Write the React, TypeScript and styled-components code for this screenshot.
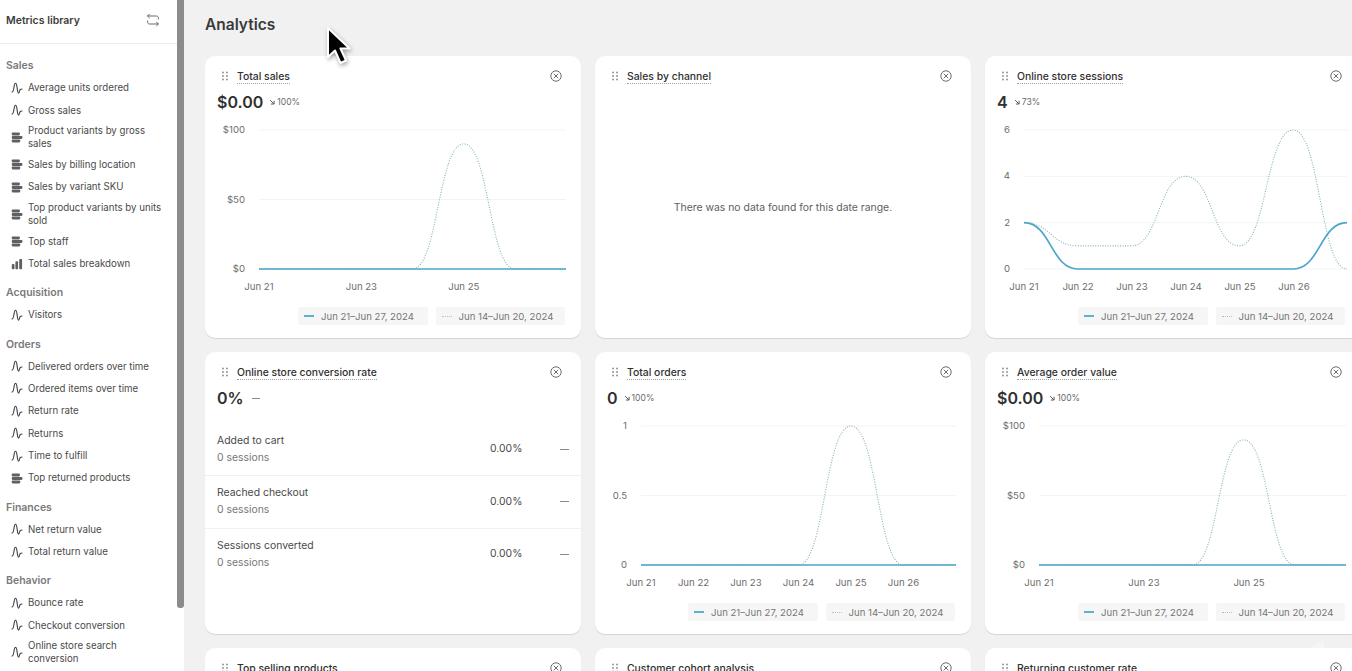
import * as React from 'react';
import styled, { createGlobalStyle } from 'styled-components';

const GlobalStyle = createGlobalStyle`
  html, body {
    margin: 0;
    padding: 0;
    height: 100%;
    overflow: hidden;
    background: #f1f1f1;
    font-family: Inter, "Liberation Sans", sans-serif;
    color: #303030;
  }
`;

const Page = styled.div`
  display: flex;
  width: 1352px;
  height: 671px;
  overflow: hidden;
  position: relative;
`;

const Sidebar = styled.aside`
  width: 177px;
  flex: none;
  background: #fff;
  overflow: hidden;
`;

const ScrollTrack = styled.div`
  width: 7px;
  flex: none;
  background: #fff;
`;

const ScrollThumb = styled.div`
  height: 608px;
  background: #8b8b8b;
  border-radius: 0 0 3px 3px;
`;

const SidebarHeader = styled.div`
  height: 44px;
  box-sizing: border-box;
  padding: 0 17px 3px 6px;
  display: flex;
  align-items: center;
  justify-content: space-between;
  border-bottom: 1px solid #ececec;
  font-size: 10.5px;
  font-weight: 600;
  color: #3d3d3d;
`;

const SidebarBody = styled.div`
  padding-top: 11px;
`;

const Section = styled.section`
  margin-bottom: 7.3px;
`;

const SectionTitle = styled.div`
  height: 21.5px;
  padding-left: 6px;
  display: flex;
  align-items: center;
  font-size: 10.5px;
  font-weight: 600;
  color: #7a7a7a;
`;

const Item = styled.div`
  display: flex;
  align-items: center;
  gap: 5px;
  min-height: 22.4px;
  box-sizing: border-box;
  padding: 3px 12px 3px 11px;
  font-size: 9.7px;
  line-height: 13px;
  color: #4a4a4a;
`;

const ItemIcon = styled.svg`
  width: 12px;
  height: 12px;
  flex: none;
  color: #454545;
`;

const Main = styled.main`
  flex: 1;
  min-width: 0;
  padding: 0 0 0 21px;
`;

const PageTitle = styled.h1`
  margin: 0;
  height: 56px;
  box-sizing: border-box;
  padding-bottom: 7px;
  display: flex;
  align-items: center;
  font-size: 15.5px;
  font-weight: 600;
  color: #3a3a3a;
`;

const CardGrid = styled.div`
  display: grid;
  grid-template-columns: repeat(3, 376px);
  grid-auto-rows: 282px;
  gap: 14px;
`;

const Card = styled.article`
  box-sizing: border-box;
  background: #fff;
  border-radius: 10px;
  box-shadow: 0 1px 1px rgba(0, 0, 0, 0.12);
  padding: 13px 16px 0 12px;
  position: relative;
  display: flex;
  flex-direction: column;
`;

const CardHead = styled.div`
  display: flex;
  align-items: center;
  height: 14px;
`;

const Grip = styled.svg`
  width: 8px;
  height: 10px;
  margin-right: 8px;
  margin-left: 4px;
  flex: none;
  color: #8a8a8a;
`;

const CardTitle = styled.span`
  margin-top: 2px;
  font-size: 10.4px;
  font-weight: 500;
  color: #303030;
  border-bottom: 1px dotted #a0a0a0;
  line-height: 12px;
`;

const CloseIcon = styled.svg`
  width: 12px;
  height: 12px;
  margin-left: auto;
  margin-right: 3px;
  color: #5c5c5c;
`;

const Metric = styled.div`
  display: flex;
  align-items: center;
  height: 18px;
  margin-top: 10px;
  gap: 6px;
`;

const MetricValue = styled.span`
  font-size: 16px;
  font-weight: 600;
  color: #303030;
`;

const MetricDelta = styled.span`
  display: flex;
  align-items: center;
  gap: 2px;
  font-size: 8.6px;
  color: #6b6b6b;
`;

const ArrowIcon = styled.svg`
  width: 6px;
  height: 6px;
  color: #555;
`;

const FlatDash = styled.span`
  width: 8px;
  height: 1px;
  margin-left: 2px;
  background: #8a8a8a;
`;

const ChartSvg = styled.svg`
  display: block;
  position: relative;
  margin-left: -12px;
  width: 376px;
  height: 176px;
  margin-top: 9px;
  overflow: visible;
`;

const ChartLabel = styled.text`
  font-family: Inter, "Liberation Sans", sans-serif;
  font-size: 9.6px;
  fill: #6d6d6d;
`;

const Legend = styled.div`
  display: flex;
  justify-content: flex-end;
  gap: 8px;
  height: 18px;
  margin-top: 11px;
`;

const LegendItem = styled.div`
  width: 129.5px;
  box-sizing: border-box;
  padding-left: 6px;
  background: #f6f6f6;
  border-radius: 2px;
  display: flex;
  align-items: center;
  gap: 7px;
  font-size: 9.6px;
  color: #777;
  white-space: nowrap;
`;

const LegendSwatch = styled.span<{ $dotted?: boolean }>`
  width: 10px;
  height: 0;
  border-top: ${(p) => (p.$dotted ? '1px dotted #b5c4c4' : '2px solid #5eb0cf')};
`;

const EmptyNote = styled.div`
  flex: 1;
  display: flex;
  align-items: center;
  justify-content: center;
  padding: 0 0 6px 4px;
  font-size: 10.4px;
  color: #5e5e5e;
`;

const FunnelList = styled.div`
  margin: 17px -16px 0 -12px;
`;

const FunnelRow = styled.div`
  display: flex;
  align-items: center;
  height: 52.3px;
  box-sizing: border-box;
  padding: 0 12px 0 12px;
  border-bottom: 1px solid #f1f1f1;
  font-size: 10.4px;
  line-height: 16.5px;

  &:last-child {
    border-bottom: 0;
  }
`;

const FunnelName = styled.div`
  flex: 1;
  color: #4a4a4a;
`;

const FunnelSub = styled.div`
  color: #777;
`;

const FunnelValue = styled.div`
  width: 33px;
  color: #4a4a4a;
`;

const FunnelDash = styled.span`
  width: 9px;
  height: 1px;
  margin-left: 37px;
  background: #8a8a8a;
`;

const Cursor = styled.svg`
  position: absolute;
  left: 322px;
  top: 24px;
  width: 32px;
  height: 44px;
  filter: drop-shadow(1px 2px 2px rgba(0, 0, 0, 0.35));
`;

const Watermark = styled.svg`
  position: absolute;
  left: 1300px;
  top: 636px;
  width: 30px;
  height: 35px;
  opacity: 0.55;
`;

type IconKind = 'line' | 'stack' | 'bars';

const LineGlyph = () => (
  <path d="M1 10C2 10 2.6 8 3 5 3.4 2.5 3.8 1.2 4.6 1.2 5.6 1.2 5.8 3.5 6.2 6.5 6.5 9 6.8 11.2 7.6 11.2 8.2 11.2 8.4 8.6 9 7.8 9.4 7.3 10.2 7 11 7" fill="none" stroke="currentColor" strokeWidth="1.15" strokeLinecap="round" />
);

const StackGlyph = () => (
  <g fill="currentColor" opacity="0.85">
    <rect x="0.8" y="1.4" width="8" height="3" rx="0.8" />
    <rect x="0.8" y="4.9" width="10.6" height="3" rx="0.8" />
    <rect x="0.8" y="8.4" width="8.4" height="3" rx="0.8" />
  </g>
);

const BarsGlyph = () => (
  <g fill="currentColor" opacity="0.85">
    <rect x="0.8" y="6" width="2.7" height="5.2" rx="0.9" />
    <rect x="4.4" y="3.2" width="2.7" height="8" rx="0.9" />
    <rect x="8.2" y="1" width="2.9" height="10.2" rx="0.9" />
  </g>
);

const MetricIcon = ({ kind }: { kind: IconKind }) => (
  <ItemIcon viewBox="0 0 12 12">
    {kind === 'line' && <LineGlyph />}
    {kind === 'stack' && <StackGlyph />}
    {kind === 'bars' && <BarsGlyph />}
  </ItemIcon>
);

const library: { title: string; items: [string, IconKind][] }[] = [
  {
    title: 'Sales',
    items: [
      ['Average units ordered', 'line'],
      ['Gross sales', 'line'],
      ['Product variants by gross sales', 'stack'],
      ['Sales by billing location', 'stack'],
      ['Sales by variant SKU', 'stack'],
      ['Top product variants by units sold', 'stack'],
      ['Top staff', 'stack'],
      ['Total sales breakdown', 'bars'],
    ],
  },
  { title: 'Acquisition', items: [['Visitors', 'line']] },
  {
    title: 'Orders',
    items: [
      ['Delivered orders over time', 'line'],
      ['Ordered items over time', 'line'],
      ['Return rate', 'line'],
      ['Returns', 'line'],
      ['Time to fulfill', 'line'],
      ['Top returned products', 'stack'],
    ],
  },
  {
    title: 'Finances',
    items: [
      ['Net return value', 'line'],
      ['Total return value', 'line'],
    ],
  },
  {
    title: 'Behavior',
    items: [
      ['Bounce rate', 'line'],
      ['Checkout conversion', 'line'],
      ['Online store search conversion', 'line'],
    ],
  },
];

const smooth = (pts: [number, number][]) =>
  pts
    .map(([x, y], i) => {
      if (i === 0) return `M${x} ${y}`;
      const [px, py] = pts[i - 1];
      const mid = (x - px) * 0.5;
      return `C${px + mid} ${py} ${x - mid} ${y} ${x} ${y}`;
    })
    .join(' ');

interface ChartProps {
  left: number;
  right: number;
  yLabels: string[];
  xLabels: string[];
  xStep: number;
  current: number[];
  previous: number[];
  max: number;
  top?: number;
  height?: number;
}

const Chart = ({ left, right, yLabels, xLabels, xStep, current, previous, max, top = 10, height = 139 }: ChartProps) => {
  const bottom = top + height;
  const step = (right - left) / (current.length - 1);
  const toPts = (vals: number[]) => vals.map((v, i): [number, number] => [left + i * step, bottom - (v / max) * height]);
  return (
    <ChartSvg viewBox="0 0 376 176">
      {yLabels.map((l, i) => {
        const y = top + (height * i) / (yLabels.length - 1);
        return (
          <g key={l}>
            <line x1={left} x2={right} y1={y} y2={y} stroke="#f3f3f3" strokeWidth="1" />
            <ChartLabel x={left - 14} y={y + 3} textAnchor="end">{l}</ChartLabel>
          </g>
        );
      })}
      {xLabels.map((l, i) => (
        <ChartLabel key={l} x={left + i * xStep} y={bottom + 21} textAnchor="middle">{l}</ChartLabel>
      ))}
      <path d={smooth(toPts(previous))} fill="none" stroke="#84b3b3" strokeWidth="1.1" strokeDasharray="1 1.5" />
      <path d={smooth(toPts(current))} fill="none" stroke="#4ba6c8" strokeWidth="1.7" />
    </ChartSvg>
  );
};

const CardHeader = ({ title }: { title: string }) => (
  <CardHead>
    <Grip viewBox="0 0 8 10">
      <g fill="currentColor">
        <circle cx="2" cy="1.5" r="0.9" />
        <circle cx="6" cy="1.5" r="0.9" />
        <circle cx="2" cy="5" r="0.9" />
        <circle cx="6" cy="5" r="0.9" />
        <circle cx="2" cy="8.5" r="0.9" />
        <circle cx="6" cy="8.5" r="0.9" />
      </g>
    </Grip>
    <CardTitle>{title}</CardTitle>
    <CloseIcon viewBox="0 0 12 12">
      <circle cx="6" cy="6" r="5.2" fill="none" stroke="currentColor" strokeWidth="0.9" />
      <path d="M4 4l4 4M8 4l-4 4" fill="none" stroke="currentColor" strokeWidth="0.9" strokeLinecap="round" />
    </CloseIcon>
  </CardHead>
);

const Delta = ({ value }: { value: string }) => (
  <MetricDelta>
    <ArrowIcon viewBox="0 0 8 8">
      <path d="M1.5 1.5l5 5M6.8 2.4v4.3H2.5" fill="none" stroke="currentColor" strokeWidth="1.3" />
    </ArrowIcon>
    {value}
  </MetricDelta>
);

const LegendRow = () => (
  <Legend>
    <LegendItem>
      <LegendSwatch />
      Jun 21–Jun 27, 2024
    </LegendItem>
    <LegendItem>
      <LegendSwatch $dotted />
      Jun 14–Jun 20, 2024
    </LegendItem>
  </Legend>
);

const funnel = [
  ['Added to cart', '0 sessions'],
  ['Reached checkout', '0 sessions'],
  ['Sessions converted', '0 sessions'],
];

const flat = [0, 0, 0, 0, 0, 0, 0];
const moneyAxis = ['$100', '$50', '$0'];
const everyOther = ['Jun 21', 'Jun 23', 'Jun 25'];
const everyDay = ['Jun 21', 'Jun 22', 'Jun 23', 'Jun 24', 'Jun 25', 'Jun 26'];

export default function App() {
  return (
    <Page>
      <GlobalStyle />
      <Sidebar>
        <SidebarHeader>
          Metrics library
          <svg width="14" height="14" viewBox="0 0 14 14" fill="none" stroke="#6b6b6b" strokeWidth="1" strokeLinecap="round" strokeLinejoin="round">
            <path d="M3.4 1.2 1.6 3l1.8 1.8M1.6 3H10.5C11.6 3 12.4 3.8 12.4 4.9V6" />
            <path d="M10.6 12.8 12.4 11l-1.8-1.8M12.4 11H3.5C2.4 11 1.6 10.2 1.6 9.1V8" />
          </svg>
        </SidebarHeader>
        <SidebarBody>
          {library.map((section) => (
            <Section key={section.title}>
              <SectionTitle>{section.title}</SectionTitle>
              {section.items.map(([label, kind]) => (
                <Item key={label}>
                  <MetricIcon kind={kind} />
                  <span>{label}</span>
                </Item>
              ))}
            </Section>
          ))}
        </SidebarBody>
      </Sidebar>
      <ScrollTrack>
        <ScrollThumb />
      </ScrollTrack>
      <Main>
        <PageTitle>Analytics</PageTitle>
        <CardGrid>
          <Card>
            <CardHeader title="Total sales" />
            <Metric>
              <MetricValue>$0.00</MetricValue>
              <Delta value="100%" />
            </Metric>
            <Chart left={54} right={361} yLabels={moneyAxis} xLabels={everyOther} xStep={102.4} current={flat} previous={[0, 0, 0, 0, 90, 0, 0]} max={100} />
            <LegendRow />
          </Card>
          <Card>
            <CardHeader title="Sales by channel" />
            <EmptyNote>There was no data found for this date range.</EmptyNote>
          </Card>
          <Card>
            <CardHeader title="Online store sessions" />
            <Metric>
              <MetricValue>4</MetricValue>
              <Delta value="73%" />
            </Metric>
            <Chart left={39} right={362} yLabels={['6', '4', '2', '0']} xLabels={everyDay} xStep={54} current={[2, 0, 0, 0, 0, 0, 2]} previous={[2, 1, 1, 4, 1, 6, 0]} max={6} />
            <LegendRow />
          </Card>
          <Card>
            <CardHeader title="Online store conversion rate" />
            <Metric>
              <MetricValue>0%</MetricValue>
              <FlatDash />
            </Metric>
            <FunnelList>
              {funnel.map(([name, sub]) => (
                <FunnelRow key={name}>
                  <FunnelName>
                    {name}
                    <FunnelSub>{sub}</FunnelSub>
                  </FunnelName>
                  <FunnelValue>0.00%</FunnelValue>
                  <FunnelDash />
                </FunnelRow>
              ))}
            </FunnelList>
          </Card>
          <Card>
            <CardHeader title="Total orders" />
            <Metric>
              <MetricValue>0</MetricValue>
              <Delta value="100%" />
            </Metric>
            <Chart left={46} right={361} yLabels={['1', '0.5', '0']} xLabels={everyDay} xStep={52.5} current={flat} previous={[0, 0, 0, 0, 1, 0, 0]} max={1} />
            <LegendRow />
          </Card>
          <Card>
            <CardHeader title="Average order value" />
            <Metric>
              <MetricValue>$0.00</MetricValue>
              <Delta value="100%" />
            </Metric>
            <Chart left={54} right={361} yLabels={moneyAxis} xLabels={everyOther} xStep={105} current={flat} previous={[0, 0, 0, 0, 90, 0, 0]} max={100} />
            <LegendRow />
          </Card>
          <Card>
            <CardHeader title="Top selling products" />
          </Card>
          <Card>
            <CardHeader title="Customer cohort analysis" />
          </Card>
          <Card>
            <CardHeader title="Returning customer rate" />
          </Card>
        </CardGrid>
      </Main>
      <Cursor viewBox="0 0 32 44">
        <path d="M6 4V33L13 26.5 18.5 39 24 36.5 18.5 24.5H27.5Z" fill="#000" stroke="#fff" strokeWidth="2" strokeLinejoin="round" />
      </Cursor>
      <Watermark viewBox="0 0 30 35">
        <path d="M10 12 24 4V35H10Z" fill="#fff" opacity="0.6" />
      </Watermark>
    </Page>
  );
}
